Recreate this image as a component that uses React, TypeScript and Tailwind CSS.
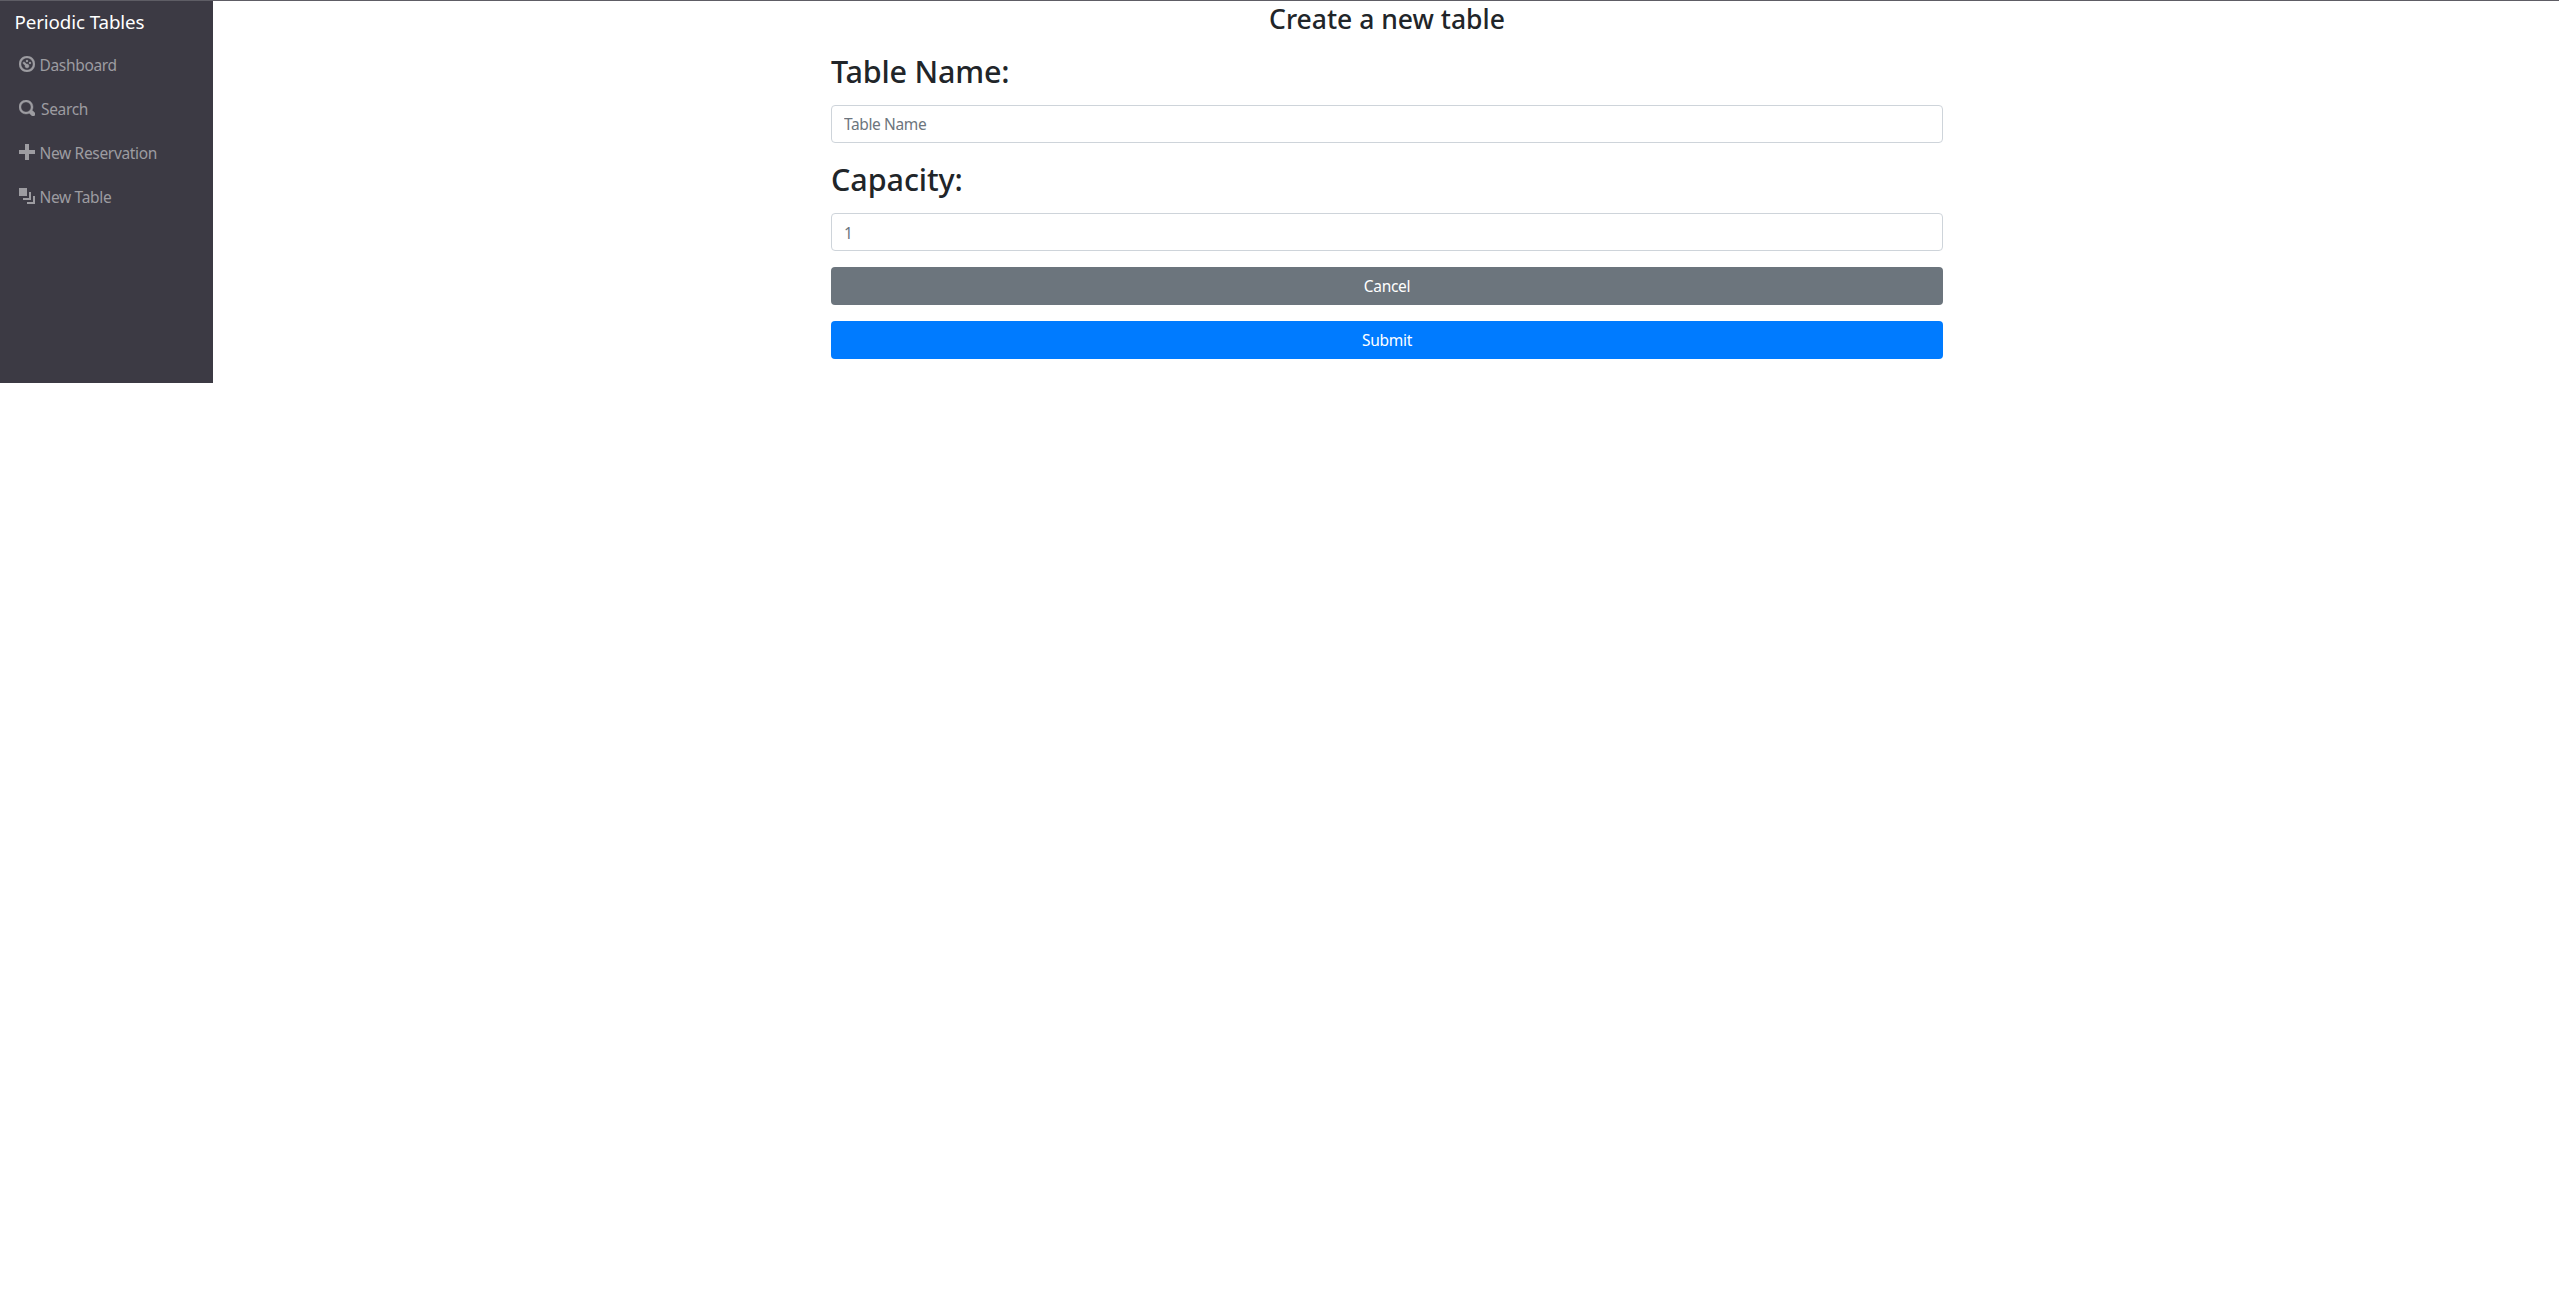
type NavItem = { label: string; path: string; gap: string; stroke: number };

const navItems: NavItem[] = [
  {
    label: "Dashboard",
    gap: "gap-[4.5px]",
    stroke: 0.2,
    path: "M4 0c-2.2 0-4 1.8-4 4s1.8 4 4 4 4-1.8 4-4-1.8-4-4-4zm0 1c1.66 0 3 1.34 3 3s-1.34 3-3 3-3-1.34-3-3 1.34-3 3-3zm0 1c-.28 0-.5.22-.5.5s.22.5.5.5.5-.22.5-.5-.22-.5-.5-.5zm-1.66 1a.5.5 0 0 0-.19.84l.91.91c-.02.08-.06.16-.06.25 0 .55.45 1 1 1s1-.45 1-1-.45-1-1-1c-.09 0-.17.04-.25.06l-.91-.91a.5.5 0 0 0-.44-.16.5.5 0 0 0-.06 0zm3.16 0c-.28 0-.5.22-.5.5s.22.5.5.5.5-.22.5-.5-.22-.5-.5-.5z",
  },
  {
    label: "Search",
    gap: "gap-[6px]",
    stroke: 0.2,
    path: "M3.5 0c-1.93 0-3.5 1.57-3.5 3.5s1.57 3.5 3.5 3.5c.59 0 1.17-.14 1.66-.41a1 1 0 0 0 .13.13l1 1a1.02 1.02 0 1 0 1.44-1.44l-1-1a1 1 0 0 0-.16-.13c.27-.49.44-1.06.44-1.66 0-1.93-1.55-3.5-3.5-3.5zm0 1c1.39 0 2.5 1.11 2.5 2.5 0 .66-.24 1.27-.66 1.72-.01.01-.02.02-.03.03a1 1 0 0 0-.13.13c-.44.4-1.04.63-1.69.63-1.39 0-2.5-1.11-2.5-2.5s1.11-2.5 2.5-2.5z",
  },
  {
    label: "New Reservation",
    gap: "gap-[4.5px]",
    stroke: 0,
    path: "M3 0v3h-3v2h3v3h2v-3h3v-2h-3v-3h-2z",
  },
  {
    label: "New Table",
    gap: "gap-[4.5px]",
    stroke: 0,
    path: "M0 0v4h4v-4h-4zm5 2v3h-3v1h4v-4h-1zm2 2v3h-3v1h4v-4h-1z",
  },
];

function Sidebar() {
  return (
    <nav className="h-[382px] w-[213px] shrink-0 bg-[#3c3a44] pt-[6px]">
      <a className="block pl-[14.5px] text-[18.75px] leading-[30px] tracking-[-0.1px] whitespace-nowrap text-white">
        Periodic Tables
      </a>
      <ul className="mt-2 flex flex-col gap-1">
        {navItems.map((item) => (
          <li key={item.label}>
            <a className={`flex h-10 items-start py-2 pl-[19px] text-[#9d9ca1] ${item.gap}`}>
              <svg
                viewBox="0 0 8 8"
                strokeWidth={item.stroke}
                className="mt-[3px] size-4 shrink-0 fill-current stroke-current"
              >
                <path d={item.path} />
              </svg>
              <span className="text-[15.5px] leading-6 tracking-[-0.33px] whitespace-nowrap">{item.label}</span>
            </a>
          </li>
        ))}
      </ul>
    </nav>
  );
}

const field =
  "block h-[38px] w-full rounded border border-[#ced4da] bg-white px-3 text-[15.5px] leading-6 tracking-[-0.38px] text-[#495057] placeholder:text-[#6c757d] placeholder:opacity-100 outline-none";
const label = "mt-[17px] mb-[15px] block text-[30.5px] leading-[38px] font-medium";
const button =
  "mt-4 block h-[38px] w-full rounded py-[7px] text-center text-[15.5px] leading-6 tracking-[-0.3px] text-white";

export default function App() {
  return (
    <div className="h-[1295px] overflow-hidden border-t border-[#5e5d65] bg-white font-['Noto_Sans',sans-serif] text-[#212529]">
      <div className="flex">
        <Sidebar />
        <main className="ml-[618px] w-[1112px]">
          <h3 className="mt-0.5 text-center text-[26.5px] leading-8 font-medium">Create a new table</h3>
          <form>
            <label className={`${label} tracking-[-0.19px]`}>Table Name:</label>
            <input className={`${field} py-1.5`} placeholder="Table Name" />
            <label className={`${label} tracking-[-0.07px]`}>Capacity:</label>
            <input className={`${field} pt-[7px] pb-[5px]`} placeholder="1" />
            <button type="button" className={`${button} bg-[#6c757d]`}>
              Cancel
            </button>
            <button type="button" className={`${button} bg-[#007bff]`}>
              Submit
            </button>
          </form>
        </main>
      </div>
    </div>
  );
}
